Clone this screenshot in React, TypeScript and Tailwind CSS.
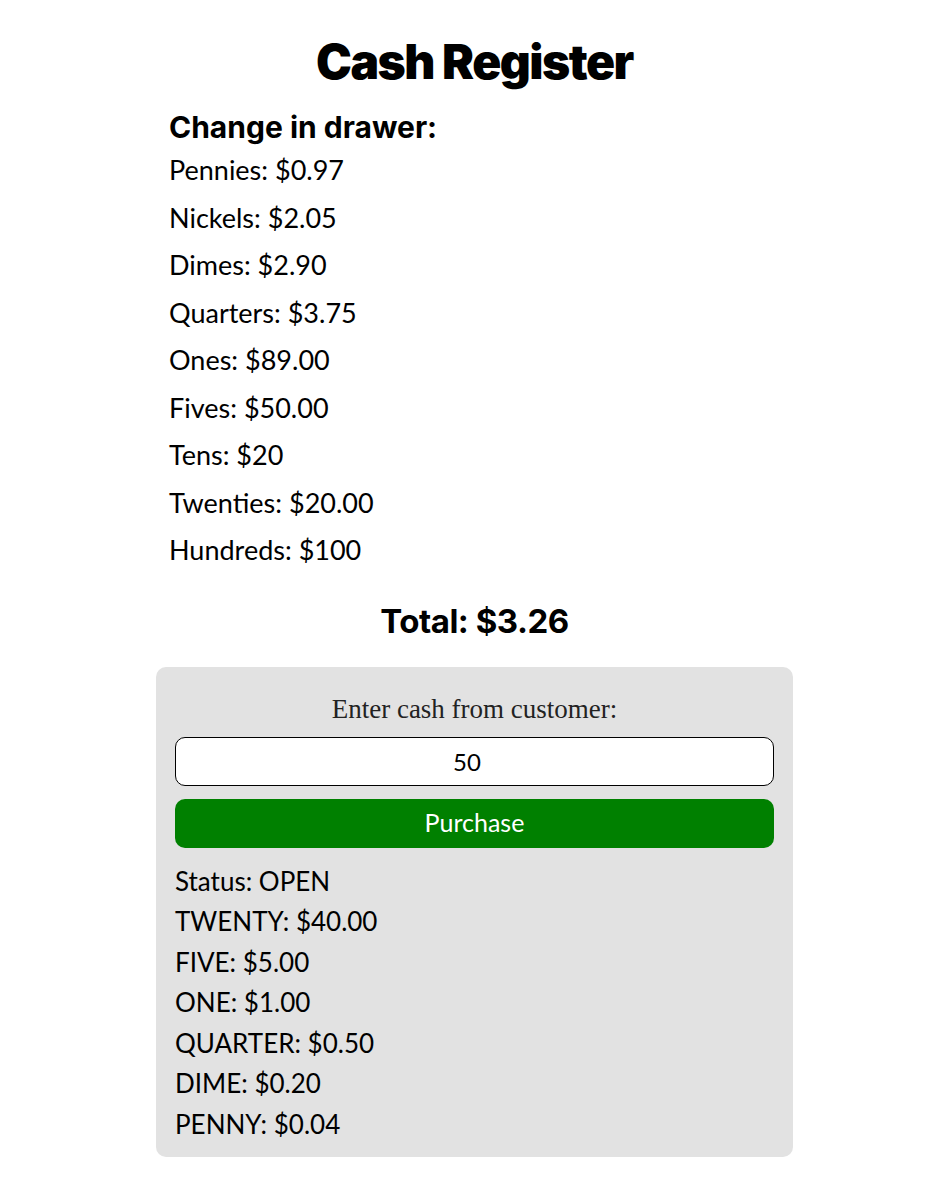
const drawer = [
  ["Pennies", "$0.97"],
  ["Nickels", "$2.05"],
  ["Dimes", "$2.90"],
  ["Quarters", "$3.75"],
  ["Ones", "$89.00"],
  ["Fives", "$50.00"],
  ["Tens", "$20"],
  ["Twenties", "$20.00"],
  ["Hundreds", "$100"],
];

const change = [
  ["TWENTY", "$40.00"],
  ["FIVE", "$5.00"],
  ["ONE", "$1.00"],
  ["QUARTER", "$0.50"],
  ["DIME", "$0.20"],
  ["PENNY", "$0.04"],
];

export default function App() {
  return (
    <div className="min-h-screen bg-white pl-[19px] text-black font-['Lato',sans-serif]">
      <main className="mx-auto w-[637px] pt-[34px] pb-[25px]">
        <h1 className="text-center font-['Inter',sans-serif] text-[48px] font-black leading-[56px] tracking-[-1.5px]">
          Cash Register
        </h1>

        {/* Drawer */}
        <section className="px-[13px] mt-[18px]">
          <h2 className="font-['Inter',sans-serif] text-[30px] font-bold leading-[38px]">
            Change in drawer:
          </h2>
          <ul>
            {drawer.map(([name, amount]) => (
              <li key={name} className="text-[27px] leading-[47.5px]">
                {name}: {amount}
              </li>
            ))}
          </ul>
        </section>

        <p className="mt-[21px] text-center font-['Inter',sans-serif] text-[33px] font-bold leading-[52px] tracking-[-0.5px]">
          Total: $3.26
        </p>

        {/* Register */}
        <section className="mt-[20px] rounded-[10px] bg-[#e2e2e2] px-[19px] pt-[25px] pb-[13px]">
          <label className="block text-center font-['Liberation_Serif',serif] text-[27px] leading-[34px] text-[#222]">
            Enter cash from customer:
          </label>
          <input
            type="number"
            defaultValue="50"
            className="mt-[11px] block h-[49px] w-full rounded-[10px] border border-black bg-white text-center text-[24px] outline-none"
          />
          <button className="mt-[13px] block h-[49px] w-full rounded-[10px] bg-[#008000] text-[25px] text-white">
            Purchase
          </button>
          <div className="mt-[13px] text-[26px] leading-[40.5px]">
            <p>Status: OPEN</p>
            {change.map(([name, amount]) => (
              <p key={name}>
                {name}: {amount}
              </p>
            ))}
          </div>
        </section>
      </main>
    </div>
  );
}
